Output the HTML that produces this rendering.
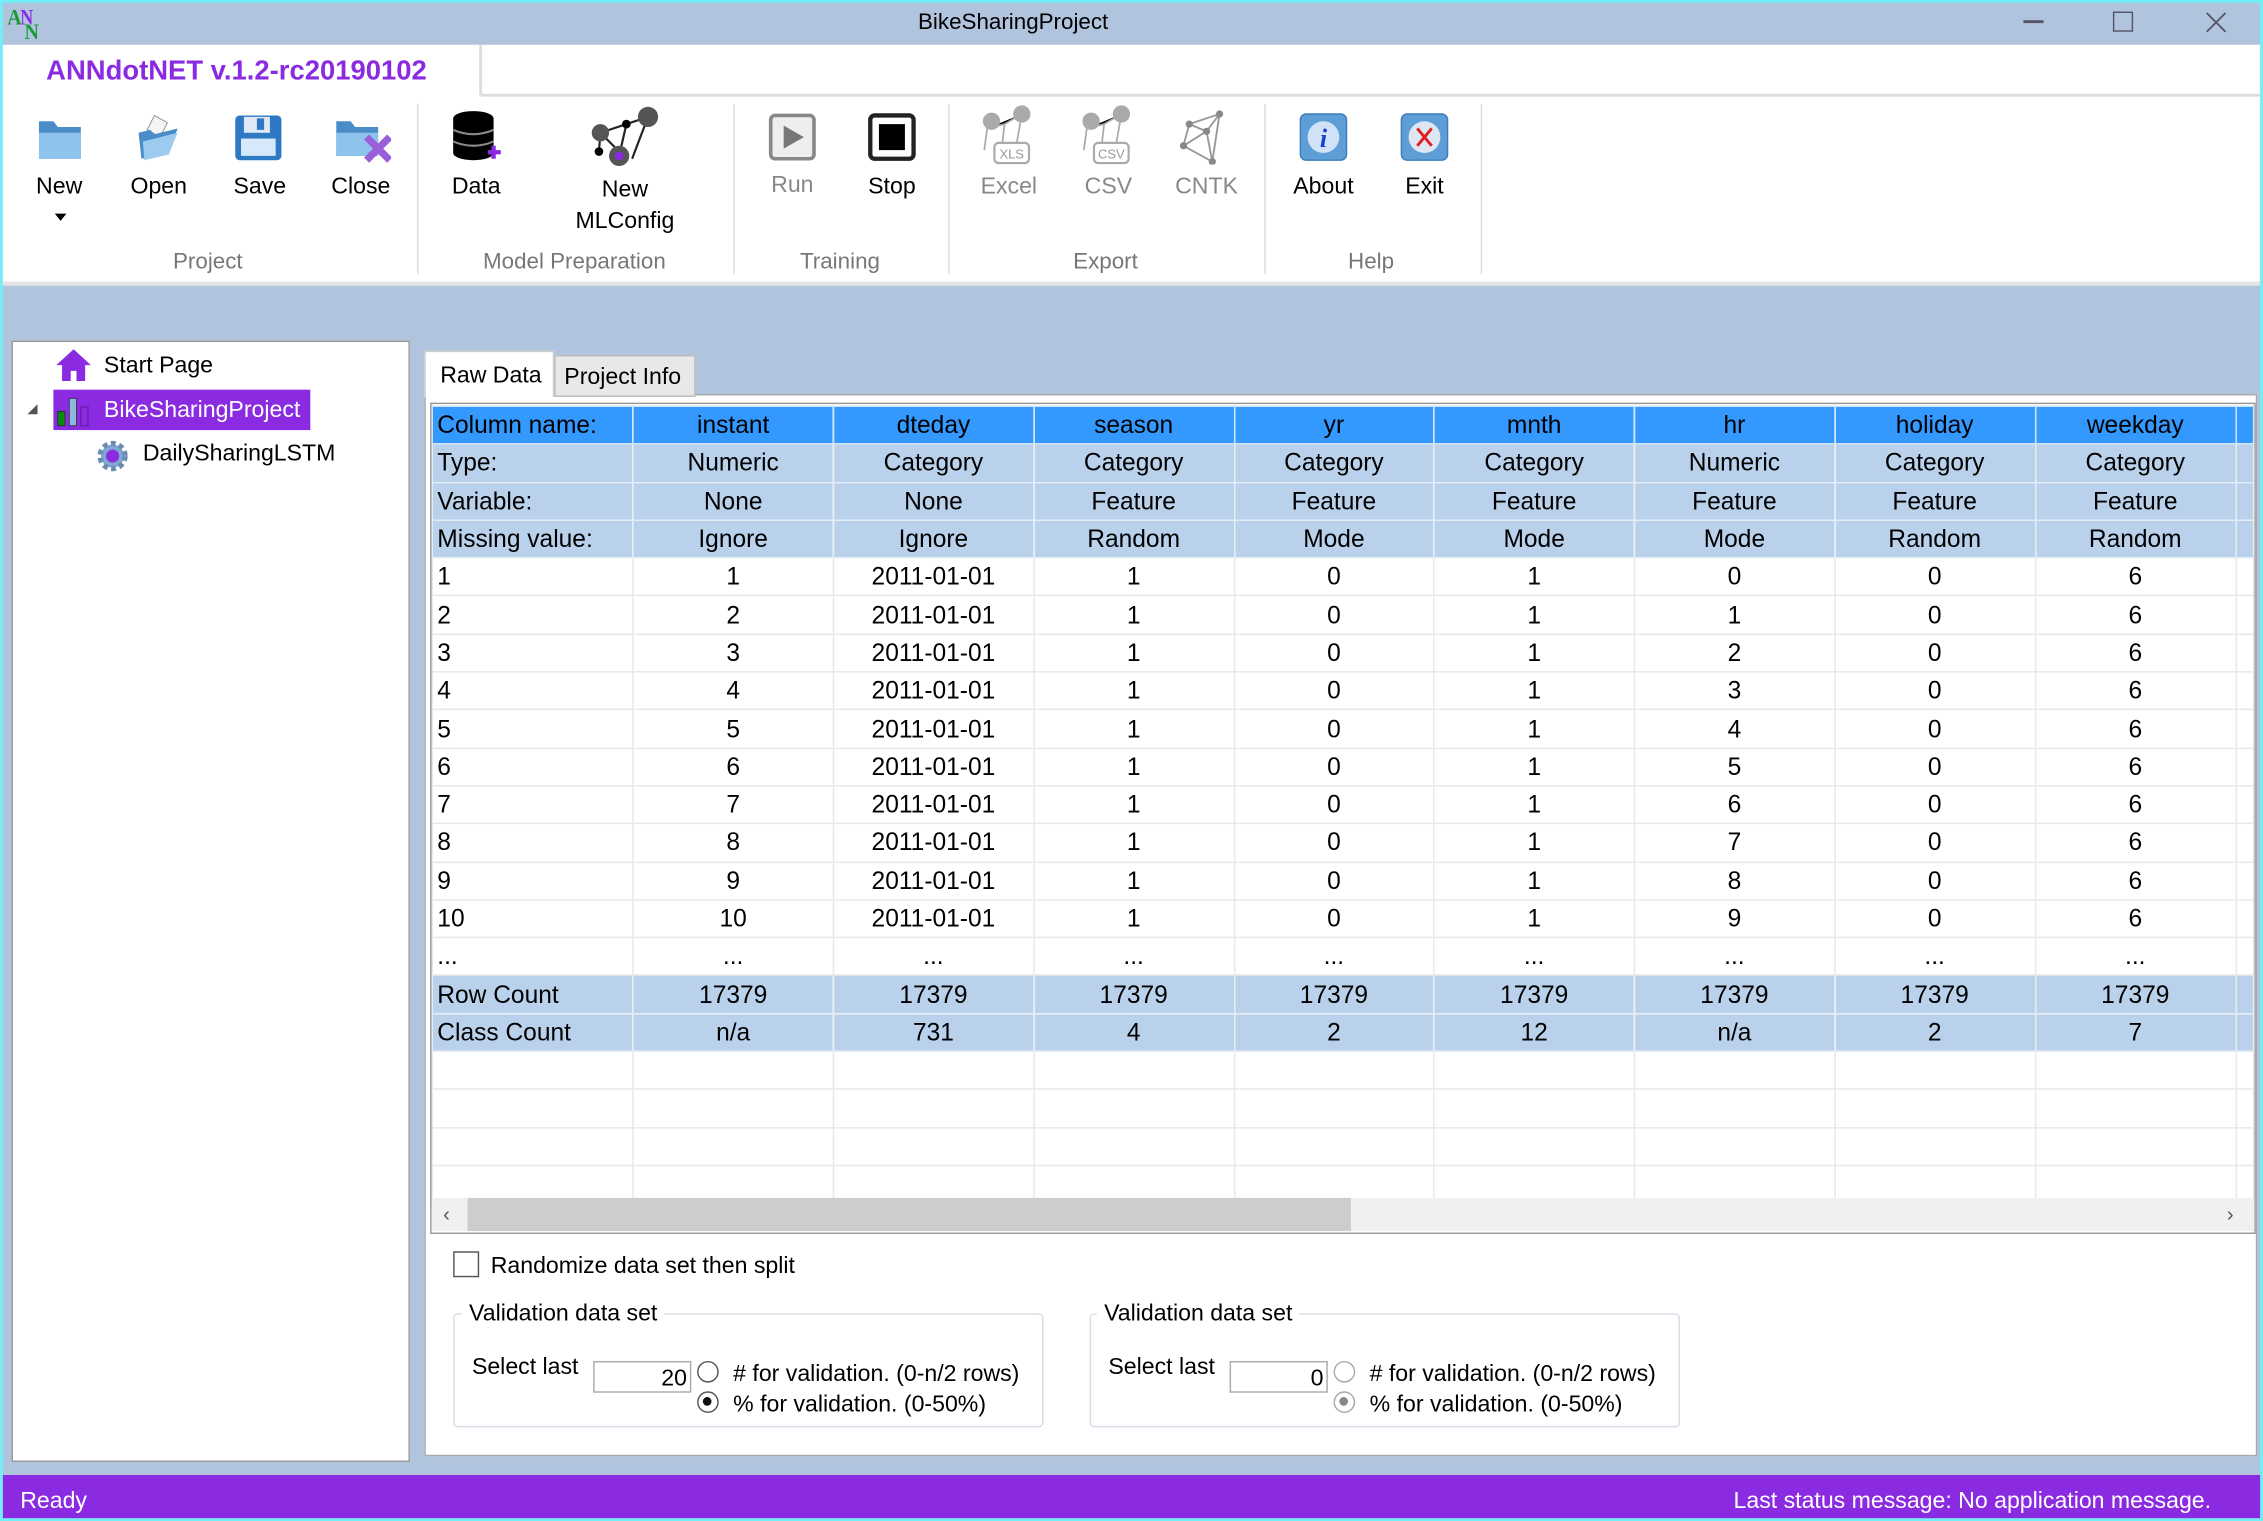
<!DOCTYPE html>
<html><head><meta charset="utf-8"><style>
html,body{margin:0;padding:0;width:2263px;height:1520px;overflow:hidden;background:#b0c4de}
#s{position:absolute;left:0;top:0;width:1568px;height:1054px;transform:scale(1.44324);transform-origin:0 0;font-family:"Liberation Sans",sans-serif;color:#000;background:#b0c4de}
.a{position:absolute}
.lbl{position:absolute;font-size:16px;text-align:center;white-space:nowrap}
.grp{position:absolute;top:173px;font-size:15.5px;color:#777;text-align:center}
.sep{position:absolute;top:72px;width:1px;height:118px;background:#ddd}
table{border-collapse:collapse;table-layout:fixed;font-size:17px}
td{border:1px solid #e8e8e8;height:25.3px;padding:0;text-align:center;white-space:nowrap;overflow:hidden;line-height:25px}
td:first-child{text-align:left;padding-left:3px}
tr.h td{background:#3399ff;border-color:#cfe3f7}
tr.m td{background:#b9d1ea;border-color:#e4ecf5}
</style></head><body><div id="s">
<div class="a" style="left:0;top:0;width:1568px;height:2px;background:#72eef6"></div>
<div class="a" style="left:0;top:0;width:2px;height:1054px;background:#72eef6"></div>
<div class="a" style="left:1566px;top:0;width:2px;height:1054px;background:#72eef6"></div>
<svg class="a" style="left:4px;top:3px" width="28" height="26"><g font-family="Liberation Serif" font-weight="bold" font-size="15"><text x="1" y="14" fill="#1a9a3a" textLength="10" lengthAdjust="spacingAndGlyphs">A</text><text x="10" y="14" fill="#8a2be2" textLength="9" lengthAdjust="spacingAndGlyphs">N</text><text x="13" y="24" fill="#1a9a3a" textLength="10" lengthAdjust="spacingAndGlyphs">N</text></g></svg>
<div class="a" style="left:0;top:7px;width:1404px;text-align:center;font-size:15.5px">BikeSharingProject</div>
<div class="a" style="left:1402px;top:14px;width:14px;height:1.5px;background:#556"></div>
<div class="a" style="left:1464px;top:8px;width:12px;height:12px;border:1.3px solid #556"></div>
<svg class="a" style="left:1528px;top:8px" width="15" height="15"><path d="M1 1L14 14M14 1L1 14" stroke="#556" stroke-width="1.3"/></svg>
<div class="a" style="left:2px;top:31px;width:1564px;height:166px;background:#fff"></div>
<div class="a" style="left:333px;top:65px;width:1233px;height:1.5px;background:#ddd"></div>
<div class="a" style="left:332px;top:31px;width:1.5px;height:35px;background:#ddd"></div>
<div class="a" style="left:32px;top:39px;font-size:19px;font-weight:bold;color:#8a2be2">ANNdotNET v.1.2-rc20190102</div>
<div class="a" style="left:2px;top:195px;width:1564px;height:3px;background:#e4e4e4"></div>
<svg class="a" style="left:25px;top:78px" width="34" height="36"><path d="M2 6h10l3 4h16v22H2z" fill="#4a8cc8"/><path d="M2 14h29v18H2z" fill="#8ec3ec"/></svg>
<svg class="a" style="left:93px;top:78px" width="34" height="36"><path d="M14 2l9 5-5 10-9-5z" fill="#f4f4f4" stroke="#888" stroke-width=".6"/><path d="M3 14l8-2 3 3 16-4-6 18L5 32z" fill="#4a8cc8"/><path d="M6 20l24-6-6 15L7 33z" fill="#9ccbef"/></svg>
<svg class="a" style="left:162px;top:78px" width="34" height="36"><rect x="1" y="2" width="32" height="31" rx="3" fill="#2e79c4"/><rect x="7" y="3" width="18" height="11" fill="#dfe9f5"/><rect x="16" y="4" width="5" height="8" fill="#2e79c4"/><rect x="5" y="18" width="24" height="12" fill="#d7e8fa"/></svg>
<svg class="a" style="left:231px;top:78px" width="40" height="36"><path d="M2 6h10l3 4h16v20H2z" fill="#4a8cc8"/><path d="M2 14h29v16H2z" fill="#8ec3ec"/><path d="M23 17l16 16M39 17L23 33" stroke="#9a5fd8" stroke-width="5"/></svg>
<svg class="a" style="left:312px;top:76px" width="36" height="38"><ellipse cx="16" cy="6" rx="14" ry="5" fill="#000"/><rect x="2" y="6" width="28" height="24" fill="#000"/><ellipse cx="16" cy="30" rx="14" ry="5" fill="#000"/><path d="M2 14q14 6 28 0M2 22q14 6 28 0" stroke="#888" stroke-width="1.5" fill="none"/><path d="M30 25v9M26 29.5h9" stroke="#8a2be2" stroke-width="3"/></svg>
<svg class="a" style="left:408px;top:70px" width="50" height="48"><g stroke="#222" stroke-width="1.5"><path d="M8 22L26 16L41 11M8 22L20 34M26 16L21 38M41 11L30 40M8 22L7 35"/></g><circle cx="8" cy="22" r="6" fill="#555"/><circle cx="41" cy="11" r="7" fill="#555"/><circle cx="21" cy="38" r="7" fill="#555"/><circle cx="21" cy="38" r="3" fill="#8a2be2"/><circle cx="26" cy="16" r="3" fill="#000"/><circle cx="7" cy="35" r="3" fill="#000"/></svg>
<svg class="a" style="left:532px;top:78px" width="34" height="34"><rect x="2" y="2" width="30" height="30" rx="3" fill="#eee" stroke="#888" stroke-width="2.5"/><path d="M11 9l14 8-14 8z" fill="#777"/></svg>
<svg class="a" style="left:601px;top:78px" width="34" height="34"><rect x="2" y="2" width="30" height="30" rx="3" fill="#fff" stroke="#222" stroke-width="3"/><rect x="8" y="8" width="18" height="18" fill="#000"/></svg>
<svg class="a" style="left:676px;top:70px" width="48" height="46"><g stroke="#aaa" stroke-width="1.2"><path d="M8 19L20 16L32 9M8 19L6 34M20 16L18 34M32 9L28 32"/></g><circle cx="11" cy="14" r="6" fill="#aaa"/><circle cx="32" cy="9" r="6" fill="#aaa"/><rect x="13" y="29" width="24" height="14" rx="3" fill="#fff" stroke="#aaa" stroke-width="1.5"/><text x="25" y="40" font-size="9" text-anchor="middle" fill="#999" font-family="Liberation Sans">XLS</text></svg>
<svg class="a" style="left:745px;top:70px" width="48" height="46"><g stroke="#aaa" stroke-width="1.2"><path d="M8 19L20 16L32 9M8 19L6 34M20 16L18 34M32 9L28 32"/></g><circle cx="11" cy="14" r="6" fill="#aaa"/><circle cx="32" cy="9" r="6" fill="#aaa"/><rect x="13" y="29" width="24" height="14" rx="3" fill="#fff" stroke="#aaa" stroke-width="1.5"/><text x="25" y="40" font-size="9" text-anchor="middle" fill="#999" font-family="Liberation Sans">CSV</text></svg>
<svg class="a" style="left:814px;top:74px" width="44" height="40"><g stroke="#999" stroke-width="1.3" fill="none"><path d="M6 27L10 12L31 5L26 38L6 27L22 17L31 5M10 12L22 17L26 38"/></g><g fill="#888"><circle cx="6" cy="27" r="2.5"/><circle cx="10" cy="12" r="2.5"/><circle cx="31" cy="5" r="2.5"/><circle cx="26" cy="38" r="2.5"/><circle cx="22" cy="17" r="2.5"/></g></svg>
<svg class="a" style="left:900px;top:78px" width="34" height="34"><rect x="1" y="1" width="32" height="32" rx="4" fill="#5e9ed6" stroke="#3d7db8"/><circle cx="17" cy="17" r="11" fill="#cfe2f8"/><text x="17" y="24" font-size="18" font-style="italic" font-weight="bold" fill="#1a3fcc" text-anchor="middle" font-family="Liberation Serif">i</text></svg>
<svg class="a" style="left:970px;top:78px" width="34" height="34"><rect x="1" y="1" width="32" height="32" rx="4" fill="#5e9ed6" stroke="#3d7db8"/><circle cx="17" cy="17" r="11" fill="#dde6f2"/><path d="M12 11l10 12M22 11l-10 12" stroke="#e02020" stroke-width="2"/></svg>
<div class="lbl" style="left:21px;top:121px;width:40px">New</div>
<div class="a" style="left:38px;top:148px;border-left:4px solid transparent;border-right:4px solid transparent;border-top:5px solid #000"></div>
<div class="lbl" style="left:85px;top:121px;width:50px">Open</div>
<div class="lbl" style="left:155px;top:121px;width:50px">Save</div>
<div class="lbl" style="left:225px;top:121px;width:50px">Close</div>
<div class="lbl" style="left:305px;top:121px;width:50px">Data</div>
<div class="lbl" style="left:393px;top:121px;width:80px;line-height:22px">New<br>MLConfig</div>
<div class="lbl" style="left:524px;top:120px;width:50px;color:#888">Run</div>
<div class="lbl" style="left:593px;top:121px;width:50px">Stop</div>
<div class="lbl" style="left:674px;top:121px;width:50px;color:#888">Excel</div>
<div class="lbl" style="left:743px;top:121px;width:50px;color:#888">CSV</div>
<div class="lbl" style="left:811px;top:121px;width:50px;color:#888">CNTK</div>
<div class="lbl" style="left:887px;top:121px;width:60px">About</div>
<div class="lbl" style="left:962px;top:121px;width:50px">Exit</div>
<div class="grp" style="left:94px;width:100px">Project</div>
<div class="grp" style="left:300px;width:196px">Model Preparation</div>
<div class="grp" style="left:532px;width:100px">Training</div>
<div class="grp" style="left:716px;width:100px">Export</div>
<div class="grp" style="left:900px;width:100px">Help</div>
<div class="sep" style="left:289px"></div><div class="sep" style="left:508px"></div><div class="sep" style="left:657px"></div><div class="sep" style="left:876px"></div><div class="sep" style="left:1026px"></div>
<div class="a" style="left:8px;top:236px;width:274px;height:775px;background:#fff;border:1px solid #999"></div>
<svg class="a" style="left:38px;top:241px" width="26" height="24"><path d="M13 1L1 12h4v11h6v-7h4v7h6V12h4z" fill="#8a2be2"/></svg>
<div class="a" style="left:72px;top:245px;font-size:16px">Start Page</div>
<div class="a" style="left:19px;top:280px;border-left:7px solid transparent;border-bottom:7px solid #555"></div>
<div class="a" style="left:37px;top:270px;width:178px;height:28px;background:#8a2be2"></div>
<svg class="a" style="left:38px;top:272px" width="26" height="26"><rect x="2" y="13" width="5" height="10" fill="#0a8a0a" stroke="#222" stroke-width=".5"/><rect x="10" y="4" width="5" height="19" fill="#8fb8dc" stroke="#222" stroke-width=".5"/><rect x="18" y="10" width="5" height="13" fill="#8a2be2" stroke="#6a1bb2"/></svg>
<div class="a" style="left:72px;top:276px;font-size:16px;color:#fff">BikeSharingProject</div>
<svg class="a" style="left:66px;top:304px" width="24" height="24"><circle cx="12" cy="12" r="8" fill="#7fa7d0" stroke="#6a8cb0" stroke-width="5" stroke-dasharray="3 2.2"/><circle cx="12" cy="12" r="7" fill="#7fa7d0"/><circle cx="12" cy="12" r="4.5" fill="#8a2be2"/></svg>
<div class="a" style="left:99px;top:306px;font-size:16px">DailySharingLSTM</div>
<div class="a" style="left:294px;top:273px;width:1268px;height:734px;background:#fff;border:1px solid #aaa"></div>
<div class="a" style="left:294px;top:243px;width:88px;height:31px;background:#fff;border:1px solid #ccc;border-bottom:none"></div>
<div class="a" style="left:305px;top:252px;font-size:16px">Raw Data</div>
<div class="a" style="left:384px;top:246px;width:96px;height:27px;background:#e8e8e8;border:1px solid #bbb"></div>
<div class="a" style="left:391px;top:253px;font-size:16px">Project Info</div>
<div class="a" style="left:298px;top:279px;width:1263px;height:574px;border:1px solid #999;background:#fff;overflow:hidden">
<table style="width:1261px;margin-top:1px">
<colgroup><col style="width:139px"><col style="width:139px"><col style="width:138.5px"><col style="width:139px"><col style="width:138.5px"><col style="width:139px"><col style="width:138.5px"><col style="width:139px"><col style="width:139px"><col style="width:12px"></colgroup>
<tr class="h"><td>Column name:</td><td>instant</td><td>dteday</td><td>season</td><td>yr</td><td>mnth</td><td>hr</td><td>holiday</td><td>weekday</td><td></td></tr>
<tr class="m"><td>Type:</td><td>Numeric</td><td>Category</td><td>Category</td><td>Category</td><td>Category</td><td>Numeric</td><td>Category</td><td>Category</td><td></td></tr>
<tr class="m"><td>Variable:</td><td>None</td><td>None</td><td>Feature</td><td>Feature</td><td>Feature</td><td>Feature</td><td>Feature</td><td>Feature</td><td></td></tr>
<tr class="m"><td>Missing value:</td><td>Ignore</td><td>Ignore</td><td>Random</td><td>Mode</td><td>Mode</td><td>Mode</td><td>Random</td><td>Random</td><td></td></tr>
<tr><td>1</td><td>1</td><td>2011-01-01</td><td>1</td><td>0</td><td>1</td><td>0</td><td>0</td><td>6</td><td></td></tr>
<tr><td>2</td><td>2</td><td>2011-01-01</td><td>1</td><td>0</td><td>1</td><td>1</td><td>0</td><td>6</td><td></td></tr>
<tr><td>3</td><td>3</td><td>2011-01-01</td><td>1</td><td>0</td><td>1</td><td>2</td><td>0</td><td>6</td><td></td></tr>
<tr><td>4</td><td>4</td><td>2011-01-01</td><td>1</td><td>0</td><td>1</td><td>3</td><td>0</td><td>6</td><td></td></tr>
<tr><td>5</td><td>5</td><td>2011-01-01</td><td>1</td><td>0</td><td>1</td><td>4</td><td>0</td><td>6</td><td></td></tr>
<tr><td>6</td><td>6</td><td>2011-01-01</td><td>1</td><td>0</td><td>1</td><td>5</td><td>0</td><td>6</td><td></td></tr>
<tr><td>7</td><td>7</td><td>2011-01-01</td><td>1</td><td>0</td><td>1</td><td>6</td><td>0</td><td>6</td><td></td></tr>
<tr><td>8</td><td>8</td><td>2011-01-01</td><td>1</td><td>0</td><td>1</td><td>7</td><td>0</td><td>6</td><td></td></tr>
<tr><td>9</td><td>9</td><td>2011-01-01</td><td>1</td><td>0</td><td>1</td><td>8</td><td>0</td><td>6</td><td></td></tr>
<tr><td>10</td><td>10</td><td>2011-01-01</td><td>1</td><td>0</td><td>1</td><td>9</td><td>0</td><td>6</td><td></td></tr>
<tr><td>...</td><td>...</td><td>...</td><td>...</td><td>...</td><td>...</td><td>...</td><td>...</td><td>...</td><td></td></tr>
<tr class="m"><td>Row Count</td><td>17379</td><td>17379</td><td>17379</td><td>17379</td><td>17379</td><td>17379</td><td>17379</td><td>17379</td><td></td></tr>
<tr class="m"><td>Class Count</td><td>n/a</td><td>731</td><td>4</td><td>2</td><td>12</td><td>n/a</td><td>2</td><td>7</td><td></td></tr>
<tr><td></td><td></td><td></td><td></td><td></td><td></td><td></td><td></td><td></td><td></td></tr>
<tr><td></td><td></td><td></td><td></td><td></td><td></td><td></td><td></td><td></td><td></td></tr>
<tr><td></td><td></td><td></td><td></td><td></td><td></td><td></td><td></td><td></td><td></td></tr>
<tr><td></td><td></td><td></td><td></td><td></td><td></td><td></td><td></td><td></td><td></td></tr>
</table>
<div class="a" style="left:0;top:550px;width:1263px;height:23px;background:#f0f0f0"></div>
<div class="a" style="left:25px;top:550px;width:612px;height:23px;background:#cdcdcd"></div>
<div class="a" style="left:8px;top:553px;font-size:14px;color:#555">&#8249;</div>
<div class="a" style="left:1244px;top:553px;font-size:14px;color:#555">&#8250;</div>
</div>
<div class="a" style="left:314px;top:867px;width:16px;height:16px;border:1.5px solid #555;background:#fff"></div>
<div class="a" style="left:340px;top:869px;font-size:16px">Randomize data set then split</div>
<div class="a" style="left:314px;top:910px;width:407px;height:77px;border:1px solid #d5dde6;border-radius:3px"></div>
<div class="a" style="left:320px;top:902px;font-size:16px;background:#fff;padding:0 5px">Validation data set</div>
<div class="a" style="left:327px;top:939px;font-size:16px">Select last</div>
<div class="a" style="left:411px;top:943px;width:68px;height:22px;border:1.5px solid #aaa;font-size:16px;text-align:right;line-height:24px;box-sizing:border-box;padding-right:2px">20</div>
<div class="a" style="left:483px;top:943px;width:13px;height:13px;border:1.2px solid #555;border-radius:50%"></div>
<div class="a" style="left:483px;top:964px;width:13px;height:13px;border:1.2px solid #555;border-radius:50%"></div>
<div class="a" style="left:487px;top:968px;width:6px;height:6px;background:#111;border-radius:50%"></div>
<div class="a" style="left:508px;top:944px;font-size:16px">#  for validation. (0-n/2 rows)</div>
<div class="a" style="left:508px;top:965px;font-size:16px">% for validation. (0-50%)</div>
<div class="a" style="left:755px;top:910px;width:407px;height:77px;border:1px solid #d5dde6;border-radius:3px"></div>
<div class="a" style="left:760px;top:902px;font-size:16px;background:#fff;padding:0 5px">Validation data set</div>
<div class="a" style="left:768px;top:939px;font-size:16px">Select last</div>
<div class="a" style="left:852px;top:943px;width:68px;height:22px;border:1.5px solid #aaa;font-size:16px;text-align:right;line-height:24px;box-sizing:border-box;padding-right:2px">0</div>
<div class="a" style="left:924px;top:943px;width:13px;height:13px;border:1.2px solid #aaa;border-radius:50%"></div>
<div class="a" style="left:924px;top:964px;width:13px;height:13px;border:1.2px solid #aaa;border-radius:50%"></div>
<div class="a" style="left:928px;top:968px;width:6px;height:6px;background:#888;border-radius:50%"></div>
<div class="a" style="left:949px;top:944px;font-size:16px">#  for validation. (0-n/2 rows)</div>
<div class="a" style="left:949px;top:965px;font-size:16px">% for validation. (0-50%)</div>
<div class="a" style="left:2px;top:1022px;width:1564px;height:30px;background:#8a2be2"></div>
<div class="a" style="left:0;top:1052px;width:1568px;height:2px;background:#72eef6"></div>
<div class="a" style="left:14px;top:1032px;font-size:16px;color:#fff">Ready</div>
<div class="a" style="right:36px;top:1032px;font-size:16px;color:#fff">Last status message: No application message.</div>
</div></body></html>
